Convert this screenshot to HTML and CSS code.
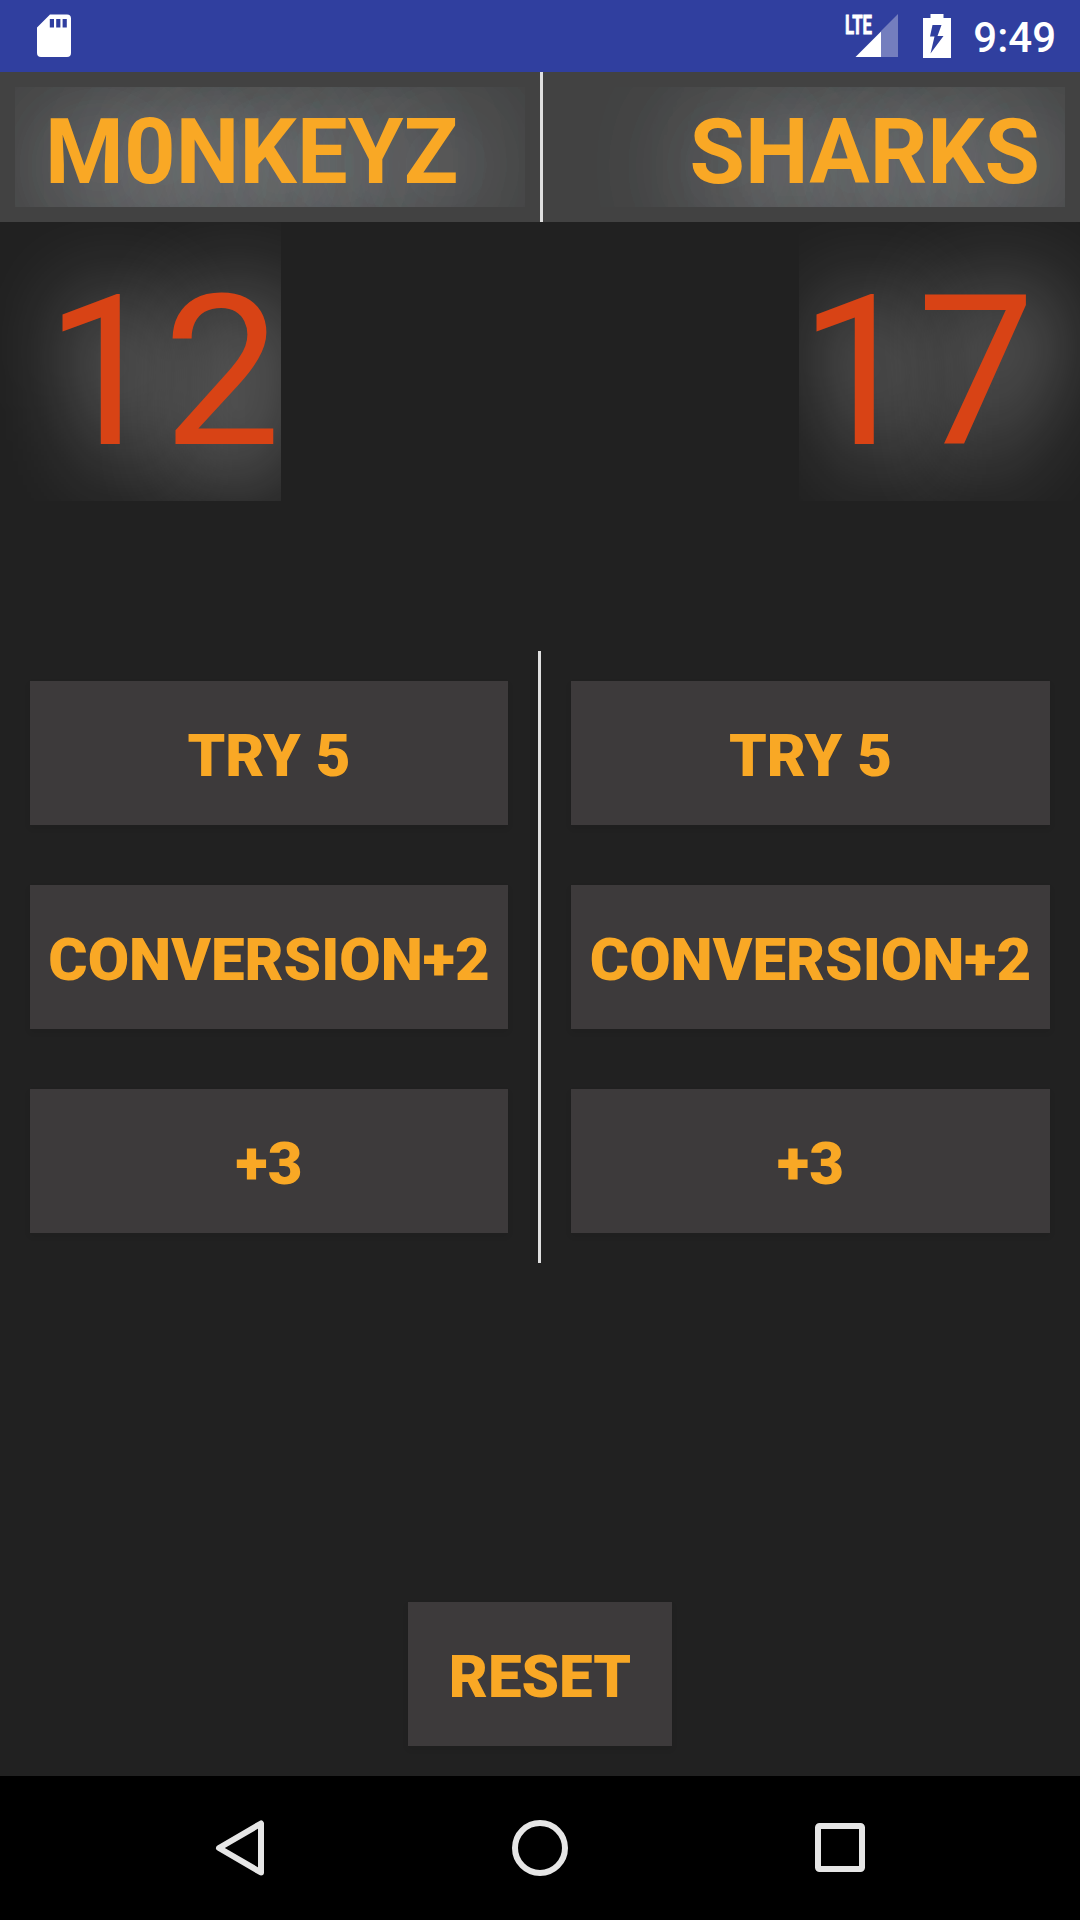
FILE: index.html
```html
<!DOCTYPE html>
<html lang="en">
<head>
<meta charset="utf-8">
<title>Score Keeper</title>
<link rel="stylesheet" href="styles.css">
</head>
<body>
<div class="screen">
  <header class="status-bar">
    <svg class="sd-icon" width="34" height="43" viewBox="0 0 34 43"><path fill="#fff" fill-rule="evenodd" d="M13 0.5H30a4 4 0 0 1 4 4V39a4 4 0 0 1-4 4H4a4 4 0 0 1-4-4V13.5ZM12.800 5v8.500h4.200V5ZM19.200 5v8.500h4.200V5ZM25.600 5v8.500h4.200V5Z"/></svg>
    <div class="status-right">
      <svg class="signal-icon" width="54" height="44" viewBox="0 0 54 44"><path fill="#fff" fill-opacity=".33" d="M53 0V43H36V17Z"/><path fill="#fff" d="M10.500 43 36 17.500V43Z"/><text class="lte" x="0" y="19.500" textLength="27" lengthAdjust="spacingAndGlyphs">LTE</text></svg>
      <svg class="battery-icon" width="28" height="44" viewBox="0 0 28 44"><path fill="#fff" fill-rule="evenodd" d="M7.500 0H20.500V4H28V44H0V4H7.500ZM9.500 11 7 22.500H11.500L7.500 39.500 20.500 22H14.500L18.500 11Z"/></svg>
      <span class="clock">9:49</span>
    </div>
  </header>
  <section class="teams">
    <h1 class="team">M0NKEYZ</h1>
    <div class="divider"></div>
    <h1 class="team team-right">SHARKS</h1>
  </section>
  <section class="scores">
    <div class="score">12</div>
    <div class="score score-right">17</div>
  </section>
  <main class="controls">
    <div class="column">
      <button class="btn">TRY 5</button>
      <button class="btn">CONVERSION+2</button>
      <button class="btn">+3</button>
    </div>
    <div class="divider"></div>
    <div class="column">
      <button class="btn">TRY 5</button>
      <button class="btn">CONVERSION+2</button>
      <button class="btn">+3</button>
    </div>
  </main>
  <div class="reset-row"><button class="btn btn-reset">RESET</button></div>
  <nav class="nav-bar">
    <svg width="60" height="60" viewBox="0 0 60 60"><path d="M51 5.500V54.500L9 30Z"/></svg>
    <svg width="60" height="60" viewBox="0 0 60 60"><circle cx="30" cy="30" r="25"/></svg>
    <svg width="60" height="60" viewBox="0 0 60 60"><rect x="8" y="8" width="44" height="43" rx="1.500"/></svg>
  </nav>
</div>
</body>
</html>
```
FILE: styles.css
```css
* { box-sizing: border-box; }
body { margin: 0; background: #212121; font-family: Roboto, sans-serif; }
.screen { width: 1080px; height: 1920px; display: flex; flex-direction: column; overflow: hidden; }

.status-bar { height: 72px; flex: none; display: flex; justify-content: space-between; background: #303f9f; padding: 14px 24px 0 37px; }
.status-right { display: flex; }
.signal-icon { margin-right: 24px; overflow: visible; }
.battery-icon { margin-right: 22px; }
.lte { font: 700 25px Roboto, sans-serif; fill: #fff; stroke: #fff; stroke-width: .8px; }
.clock { font-size: 42px; font-weight: 500; line-height: 48px; color: #fff; }

.teams { height: 150px; flex: none; display: grid; grid-template-columns: 540px 3px 537px; background: #424242; }
.team { margin: 15px; height: 120px; padding: 13px 30px 0; overflow: hidden; font-size: 90px; line-height: 105px; font-weight: 700; letter-spacing: .2px; color: #f9a825; text-shadow: 15px 15px 125px #d4d8e0, 15px 15px 125px rgba(212, 216, 224, .4); }
.team-right { text-align: right; padding-right: 25px; letter-spacing: 0; }
.divider { width: 3px; background: #e0e0e0; }

.scores { height: 429px; flex: none; display: flex; justify-content: space-between; align-items: flex-start; }
.score { width: 281px; height: 279px; padding: 27px 0 0 45px; overflow: hidden; font-size: 210px; line-height: 246px; color: #d84315; text-shadow: 15px 15px 100px #fff; }
.score-right { padding-left: 0; }

.controls { height: 612px; flex: none; display: grid; grid-template-columns: 538px 3px 539px; }
.column { padding: 30px; display: flex; flex-direction: column; gap: 60px; }
.btn { height: 144px; flex: none; padding: 6px 0 0; border: 0; background: #3d3a3b; color: #f9a825; font: 900 60px/70px Roboto, sans-serif; text-align: center; white-space: nowrap; box-shadow: 0 3px 6px rgba(0, 0, 0, .08); }

.reset-row { flex: 1; display: flex; justify-content: center; align-items: flex-end; padding-bottom: 30px; }
.btn-reset { width: 264px; }

.nav-bar { height: 144px; flex: none; display: flex; justify-content: center; align-items: center; gap: 240px; background: #000; }
.nav-bar svg { fill: none; stroke: #e6e6e6; stroke-width: 6; stroke-linejoin: round; }
```
